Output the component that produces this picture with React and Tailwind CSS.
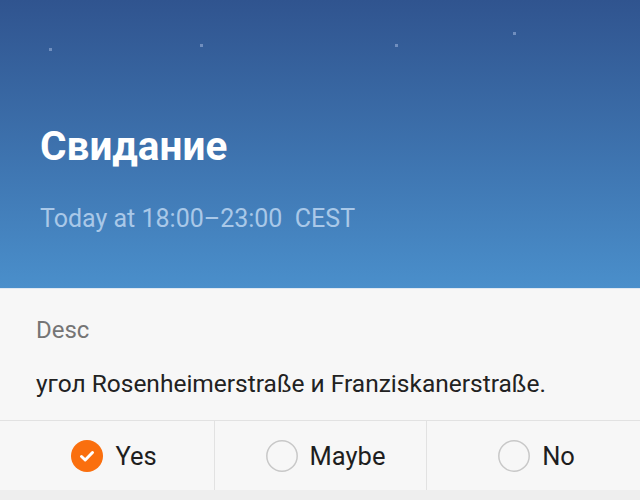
import React from "react";

function Radio({ checked }) {
  if (checked) {
    return (
      <svg width="32" height="32" viewBox="0 0 32 32" className="shrink-0">
        <circle cx="16" cy="16" r="16" fill="#fa6f0e" />
        <path d="M10.5 16.5 L14.2 20 L21.5 12.5" fill="none" stroke="#fff" strokeWidth="3" strokeLinecap="round" strokeLinejoin="round" />
      </svg>
    );
  }
  return (
    <svg width="32" height="32" viewBox="0 0 32 32" className="shrink-0">
      <circle cx="16" cy="16" r="15.2" fill="none" stroke="#c8c8c8" strokeWidth="1.5" />
    </svg>
  );
}

function Option({ label, checked, cls }) {
  return (
    <div className={"flex items-center justify-center gap-3 " + cls}>
      <Radio checked={checked} />
      <span className="text-[25.5px] leading-[26px] text-[#1e1e1e]">{label}</span>
    </div>
  );
}

export default function App() {
  return (
    <div className="w-[640px] h-[500px] overflow-hidden bg-[#eeeeee] flex flex-col" style={{ fontFamily: "Roboto, 'Noto Sans', sans-serif" }}>
      <div className="relative h-[288px] shrink-0 bg-gradient-to-b from-[#30548f] to-[#4a8fcb] pl-10 pt-[126px] flex flex-col items-start">
        <span className="absolute left-[49px] top-[48px] w-[3px] h-[3px] bg-[#7f9bc8] opacity-80" />
        <span className="absolute left-[200px] top-[44px] w-[3px] h-[3px] bg-[#7f9bc8] opacity-80" />
        <span className="absolute left-[395px] top-[44px] w-[3px] h-[3px] bg-[#7f9bc8] opacity-80" />
        <span className="absolute left-[513px] top-[32px] w-[3px] h-[3px] bg-[#7f9bc8] opacity-80" />
        <div className="text-white font-bold text-[40.5px] leading-[40px]">Свидание</div>
        <div className="mt-[40px] text-[#a9c8e8] text-[25px] leading-[25px] whitespace-pre">Today at 18:00–23:00  CEST</div>
      </div>
      <div className="bg-[#f7f7f7] border-t border-[#dfe8f2] flex flex-col">
        <div className="pl-9 pt-[29px] pb-[24px] border-b border-[#e2e2e2] flex flex-col items-start">
          <div className="text-[24px] leading-[24px] text-[#757575]">Desc</div>
          <div className="whitespace-nowrap mt-[29px] text-[24.5px] leading-[25px] text-[#222222]">угол Rosenheimerstraße и Franziskanerstraße.</div>
        </div>
        <div className="h-[69px] flex">
          <Option label="Yes" checked cls="w-[214px] shrink-0 pl-[14px]" />
          <Option label="Maybe" cls="w-[212px] shrink-0 pl-[10px] border-l border-[#e2e2e2]" />
          <Option label="No" cls="flex-1 pl-[6px] border-l border-[#e2e2e2]" />
        </div>
      </div>
    </div>
  );
}
